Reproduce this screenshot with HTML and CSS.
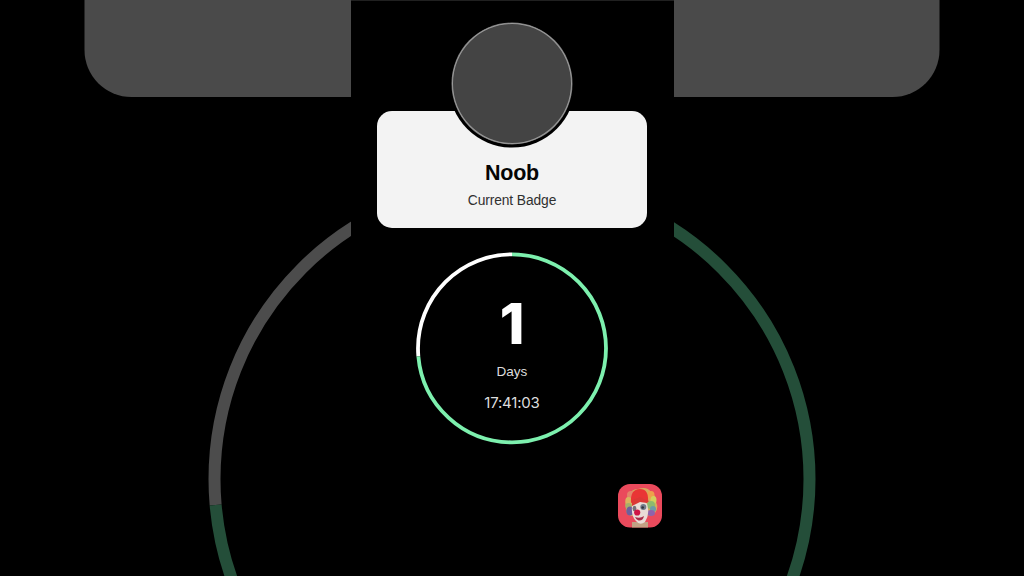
FILE: index.html
```html
<!DOCTYPE html>
<html lang="en">
<head>
<meta charset="utf-8">
<title>Current Badge</title>
<link rel="stylesheet" href="styles.css">
</head>
<body>
<div class="stage">
  <svg class="backdrop" viewBox="0 0 1024 576" aria-hidden="true">
    <rect class="backdrop-card" x="84.5" y="-100" width="855" height="197" rx="47"/>
    <circle class="backdrop-ring" cx="512" cy="479" r="297.5" pathLength="360" transform="rotate(-90 512 479)"/>
    <circle class="backdrop-progress" cx="512" cy="479" r="297.5" pathLength="360" transform="rotate(-90 512 479)"/>
  </svg>
  <main class="phone">
    <section class="card">
      <div class="avatar"></div>
      <h1 class="badge">Noob</h1>
      <p class="caption">Current Badge</p>
    </section>
    <section class="timer">
      <svg class="ring" viewBox="0 0 192 192" aria-hidden="true">
        <circle class="ring-track" cx="96" cy="96.3" r="94" pathLength="360" transform="rotate(-90 96 96.3)"/>
        <circle class="ring-progress" cx="96" cy="96.3" r="94" pathLength="360" transform="rotate(-90 96 96.3)"/>
      </svg>
      <div class="count">1</div>
      <div class="unit">Days</div>
      <div class="clock">17:41:03</div>
    </section>
    <svg class="clown" viewBox="0 0 44 44" role="img" aria-label="Clown">
      <defs>
        <clipPath id="tile"><rect width="44" height="43.5" rx="12"/></clipPath>
        <filter id="soft" x="-20%" y="-20%" width="140%" height="140%"><feGaussianBlur stdDeviation=".7"/></filter>
        <filter id="feature" x="-30%" y="-30%" width="160%" height="160%"><feGaussianBlur stdDeviation=".45"/></filter>
      </defs>
      <g clip-path="url(#tile)">
        <rect width="44" height="44" fill="#ea4a5c"/>
        <g filter="url(#soft)">
          <path d="M13 32Q7 29 8 24Q6 18 10 12Q13 5 20 5Q29 2 33 8Q38 11 38 18Q41 24 37 29Q34 33 29 31Z" fill="#d7a95c"/>
          <ellipse cx="13" cy="11" rx="4" ry="4" fill="#e3846a"/>
          <ellipse cx="10.500" cy="17" rx="3.200" ry="4" fill="#d9b45e"/>
          <ellipse cx="10.500" cy="22" rx="3.200" ry="3" fill="#a5b06a"/>
          <ellipse cx="12" cy="27" rx="3.800" ry="4.500" fill="#6d5f9c"/>
          <ellipse cx="33" cy="11" rx="3.500" ry="4" fill="#eda04c"/>
          <ellipse cx="35.500" cy="16" rx="3" ry="4" fill="#d3cf5c"/>
          <ellipse cx="33" cy="21" rx="4" ry="4" fill="#8eb96e"/>
          <ellipse cx="35" cy="25" rx="3" ry="3" fill="#6d9aa8"/>
          <ellipse cx="33" cy="29" rx="4" ry="3" fill="#8f64ab"/>
          <path d="M13 19Q12 5 22 5Q31 5 30 18L22 15Z" fill="#e93535"/>
          <path d="M14 38H30V45H14Z" fill="#c2a184"/>
        </g>
        <g filter="url(#feature)">
          <path d="M14 22Q16 16 23 16Q30 17 30 25Q31 32 27 38Q22 42 18 37Q13 32 14 22Z" fill="#eadcd7"/>
          <ellipse cx="16.500" cy="24.500" rx="1.900" ry="2.700" fill="#777079"/>
          <ellipse cx="25.300" cy="23" rx="3" ry="3" fill="#717c89"/>
          <circle cx="24.700" cy="23.500" r="1.300" fill="#30343e"/>
          <path d="M14 16L22 13L31 17L29 19L22 18L14 22Z" fill="#dc3936"/>
          <circle cx="19.200" cy="28.500" r="3.100" fill="#cf1244"/>
          <path d="M17 33Q22 35 26 32Q25 37 20.500 36.500Q18 36 17 33Z" fill="#a92e4c"/>
        </g>
      </g>
    </svg>
  </main>
</div>
</body>
</html>
```
FILE: styles.css
```css
* {
  box-sizing: border-box;
}

body {
  margin: 0;
  overflow: hidden;
  background: #000;
  font-family: "Liberation Sans", Arial, sans-serif;
}

.stage {
  display: flex;
  justify-content: center;
  position: relative;
  width: 1024px;
  height: 576px;
  overflow: hidden;
}

.backdrop {
  position: absolute;
  inset: 0;
  width: 100%;
  height: 100%;
}

.backdrop-card {
  fill: #4a4a4a;
}

.backdrop-ring,
.backdrop-progress {
  fill: none;
  stroke: #4c4c4c;
  stroke-width: 12;
  stroke-dasharray: 0 265 95;
}

.backdrop-progress {
  stroke: #244e39;
  stroke-dasharray: 265 95;
}

.backdrop-ring {
  stroke-dasharray: 95 265;
  stroke-dashoffset: -265;
}

.phone {
  position: relative;
  display: flex;
  flex-direction: column;
  align-items: center;
  width: 323px;
  height: 576px;
  padding-top: 110px;
  background: #000;
  border-top: 1px solid #202020;
}

.card {
  position: relative;
  display: flex;
  flex-direction: column;
  align-items: center;
  width: 270px;
  height: 117px;
  padding-top: 48px;
  background: #f3f3f3;
  border-radius: 15px;
}

.avatar {
  position: absolute;
  top: -88px;
  left: 75px;
  width: 120px;
  height: 121px;
  background: #444;
  border: 1.500px solid #999;
  border-radius: 50%;
  box-shadow: 0 0 0 .5px #777, 0 0 0 3.500px #000;
}

.badge {
  margin: 0;
  color: #050505;
  font: 700 21.500px/28px "Liberation Sans", Arial, sans-serif;
  letter-spacing: -.2px;
}

.caption {
  margin: 4px 0 0;
  color: #303030;
  font-size: 13.800px;
  line-height: 20px;
  letter-spacing: -.1px;
}

.timer {
  position: relative;
  display: flex;
  flex-direction: column;
  align-items: center;
  width: 192px;
  height: 192px;
  margin-top: 24px;
  padding-top: 42px;
  color: #ddd;
}

.ring {
  position: absolute;
  inset: 0;
  overflow: visible;
}

.ring-track,
.ring-progress {
  fill: none;
  stroke: #fff;
  stroke-width: 3.800;
}

.ring-track {
  stroke-dasharray: 95 265;
  stroke-dashoffset: -265;
}

.ring-progress {
  stroke: #7df0ae;
  stroke-dasharray: 265 95;
}

.count {
  color: #fff;
  font: 800 56px/60px Inter, sans-serif;
}

.unit {
  margin-top: 8px;
  font-size: 13.500px;
  line-height: 20px;
}

.clock {
  margin-top: 11px;
  font: 400 15px/20px Inter, sans-serif;
  letter-spacing: -.2px;
}

.clown {
  align-self: flex-end;
  width: 44px;
  height: 44px;
  margin: 40px 12px 0 0;
}
```
